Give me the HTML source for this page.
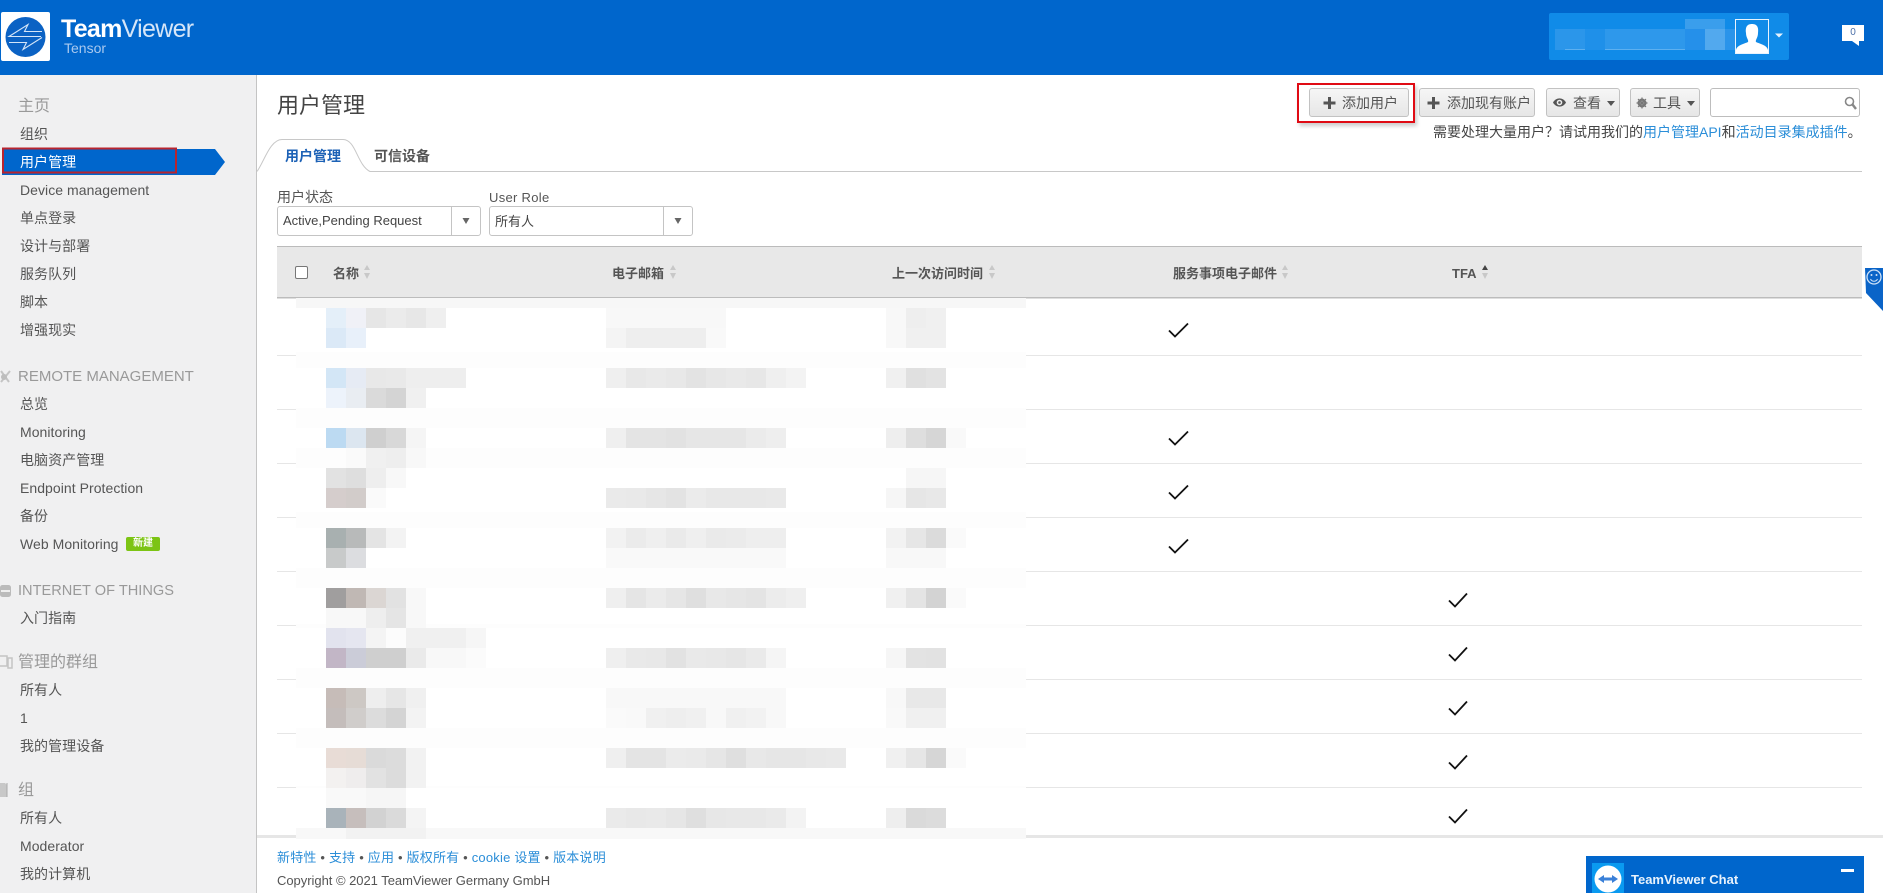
<!DOCTYPE html>
<html lang="zh">
<head>
<meta charset="utf-8">
<title>用户管理</title>
<style>
html,body{margin:0;padding:0;background:#fff}
body{width:1883px;height:893px;overflow:hidden;position:relative;font-family:"Liberation Sans","Noto Sans CJK SC",sans-serif;font-size:14px;color:#555}
.a{position:absolute;white-space:nowrap;line-height:20px}
.b{position:absolute;box-sizing:border-box;top:88px;height:29px;border:1px solid #c2c2c2;border-radius:3px;background:linear-gradient(#f6f6f6,#e6e6e6)}
.n{left:20px;color:#555;letter-spacing:.05px}
.s{left:18px;color:#999;font-size:16px}
.l{font-size:14.6px;letter-spacing:0}
.h{font-size:13px;font-weight:bold;color:#555}
a{color:#2b8ed8;text-decoration:none}
svg{position:absolute;overflow:visible}
</style>
</head>
<body>
<!-- header -->
<div style="position:absolute;left:0;top:0;width:1883px;height:75px;background:#0066cc"></div>
<div style="position:absolute;left:1px;top:12px;width:49px;height:49px;background:#fff;border-radius:2px"></div>
<svg style="left:0;top:0" width="60" height="70"><circle cx="25.5" cy="37" r="20" fill="#0b62c4"/><path d="M42 31.500H24.500L28 24.500 9 36.500H41M42 37.500 23 49.500 26.500 42.500H9" fill="none" stroke="#d4e5f8" stroke-width="1.100"/></svg>
<div class="a" style="left:61px;top:15px;font-size:25px;line-height:28px;color:#fff;letter-spacing:-.7px"><b>Team</b><span style="color:#d6e6f8">Viewer</span></div>
<div class="a" style="left:64px;top:38px;font-size:14px;color:#a9c9ef">Tensor</div>

<div style="position:absolute;left:1549px;top:13px;width:240px;height:47px;background:#108be8;border-radius:2px"></div>
<svg style="left:0;top:0" width="1883" height="75">
<rect x="1685" y="19" width="40" height="10" fill="#3a9eec"/>
<rect x="1555" y="29" width="30" height="21" fill="#2b96ea"/><rect x="1585" y="29" width="20" height="21" fill="#1f90e9"/><rect x="1605" y="29" width="80" height="21" fill="#2e98eb"/><rect x="1685" y="29" width="20" height="21" fill="#2590ea"/><rect x="1705" y="29" width="20" height="21" fill="#52a9ee"/><rect x="1725" y="29" width="10" height="21" fill="#2a94ea"/>
<rect x="1565" y="49" width="20" height="1" fill="#5db0f0"/><rect x="1605" y="49" width="80" height="1" fill="#5db0f0"/>
<rect x="1735.500" y="19.500" width="33" height="34" fill="#108be8" stroke="#e8f3fd"/>
<path d="M1736 53V50C1737 45 1744 44 1748 42 1749 40 1746 38 1746 33 1745 26 1748 24 1752 24S1759 26 1758 33C1758 38 1755 40 1756 42 1760 44 1767 45 1768 50V53Z" fill="#fff"/>
<path d="M1775 33.500H1783L1779 37.500Z" fill="#e6f2fc"/>
<path d="M1842 25H1864V41H1859V46L1852 41H1842Z" fill="#fff"/>
</svg>
<div class="a" style="left:1842px;top:23px;width:22px;text-align:center;font-size:10px;color:#4a6fa8">0</div>

<!-- sidebar -->
<div style="position:absolute;left:0;top:75px;width:256px;height:818px;background:#f0f0f1;border-right:1px solid #c4c4c4"></div>
<div class="a s" style="top:97px">主页</div>
<div class="a n" style="top:124px">组织</div>
<svg style="left:0;top:0" width="240" height="190"><rect x="2" y="152" width="172" height="23" fill="#9aa" opacity=".35"/><path d="M2 149H215L225 162 215 175H2Z" fill="#0066cc"/><rect x="3" y="148.500" width="173" height="24" fill="none" stroke="#b8242f" stroke-width="2"/></svg>
<div class="a n" style="top:152px;color:#fff">用户管理</div>
<div class="a n" style="top:180px">Device management</div>
<div class="a n" style="top:208px">单点登录</div>
<div class="a n" style="top:236px">设计与部署</div>
<div class="a n" style="top:264px">服务队列</div>
<div class="a n" style="top:292px">脚本</div>
<div class="a n" style="top:320px">增强现实</div>

<svg style="left:0;top:0" width="20" height="893">
<g fill="none" stroke="#c4c4c4" stroke-width="2"><path d="M1 371L9 382M10 371L1 382"/></g><circle cx="4" cy="377" r="3" fill="#bdbdbd"/>
<rect x="0" y="585" width="11" height="12" rx="2.500" fill="#bbb"/><path d="M1 591H10" stroke="#fff" stroke-width="1.500"/>
<path d="M0 656H7V666H0M8 658H12V668H8Z" fill="none" stroke="#c4c4c4" stroke-width="1.500"/>
<path d="M0 783H5L7 785V797H0Z" fill="#c8c8c8"/><path d="M7 783V797" stroke="#aaa"/>
</svg>
<div class="a s" style="top:367px;font-size:15px">REMOTE MANAGEMENT</div>
<div class="a n" style="top:394px">总览</div>
<div class="a n" style="top:422px">Monitoring</div>
<div class="a n" style="top:450px">电脑资产管理</div>
<div class="a n" style="top:478px">Endpoint Protection</div>
<div class="a n" style="top:506px">备份</div>
<div class="a n" style="top:534px">Web Monitoring</div>
<div class="a" style="left:126px;top:537px;width:34px;height:14px;line-height:14px;background:#7cc414;border-radius:2px;color:#fff;font-size:10px;font-weight:bold;text-align:center">新建</div>
<div class="a s l" style="top:581px">INTERNET OF THINGS</div>
<div class="a n" style="top:608px">入门指南</div>
<div class="a s" style="top:653px">管理的群组</div>
<div class="a n" style="top:680px">所有人</div>
<div class="a n" style="top:708px">1</div>
<div class="a n" style="top:736px">我的管理设备</div>
<div class="a s" style="top:781px">组</div>
<div class="a n" style="top:808px">所有人</div>
<div class="a n" style="top:836px">Moderator</div>
<div class="a n" style="top:864px">我的计算机</div>

<!-- title + toolbar -->
<div class="a" style="left:277px;top:91px;font-size:22px;line-height:30px;color:#444">用户管理</div>

<div style="position:absolute;left:1297px;top:83px;width:118px;height:40px;border:2px solid #e00b14;box-sizing:border-box;box-shadow:2px 3px 4px rgba(0,0,0,.2)"></div>
<div class="b" style="left:1309px;width:100px"></div>
<div class="b" style="left:1419px;width:116px"></div>
<div class="b" style="left:1546px;width:74px"></div>
<div class="b" style="left:1630px;width:70px"></div>
<div style="position:absolute;box-sizing:border-box;left:1710px;top:88px;width:150px;height:29px;border:1px solid #bdbdbd;border-radius:3px;background:#fff"></div>
<svg style="left:0;top:0" width="1883" height="125">
<path d="M1329.500 97V109M1323.500 103H1335.500M1433.500 97V109M1427.500 103H1439.500" stroke="#555" stroke-width="3"/>
<path d="M1553 102.500C1556 97 1563 97 1566 102.500 1563 108 1556 108 1553 102.500Z" fill="#555"/><circle cx="1559.500" cy="102.500" r="2.800" fill="#eee"/><circle cx="1559.500" cy="102.500" r="1.300" fill="#555"/>
<path d="M1607 101H1615L1611 106Z M1687 101H1695L1691 106Z" fill="#555"/>
<circle cx="1642" cy="103" r="3.400" fill="none" stroke="#777" stroke-width="2.200"/><path d="M1642 97.500V108.500M1636.500 103H1647.500M1638 99L1646 107M1646 99L1638 107" stroke="#777" stroke-width="1.200"/>
<circle cx="1849.500" cy="101.500" r="4" fill="none" stroke="#888" stroke-width="1.600"/><path d="M1852.500 104.500L1856 109" stroke="#888" stroke-width="2.400"/>
</svg>
<div class="a" style="left:1342px;top:93px;color:#555">添加用户</div>
<div class="a" style="left:1447px;top:93px;color:#555">添加现有账户</div>
<div class="a" style="left:1573px;top:93px;color:#555">查看</div>
<div class="a" style="left:1653px;top:93px;color:#555">工具</div>
<div class="a" style="left:1433px;top:122px;font-size:14px;color:#444">需要处理大量用户&#65311;请试用我们的<a href="#">用户管理API</a>和<a href="#">活动目录集成插件</a>。</div>

<!-- tabs -->
<svg style="left:0;top:0" width="1883" height="180"><path d="M257 171.500C264 162 270 139.500 282 139.500H343C356 139.500 357 165 370 171.500H1862" fill="#fff" stroke="#c8c8c8"/></svg>
<div class="a" style="left:285px;top:146px;font-weight:bold;color:#1d62b6">用户管理</div>
<div class="a" style="left:374px;top:146px;font-weight:bold;color:#555">可信设备</div>

<!-- filters -->
<div class="a" style="left:277px;top:187px;font-size:14px;color:#555">用户状态</div>
<div class="a" style="left:489px;top:188px;font-size:13px;color:#555;letter-spacing:.3px">User Role</div>
<div style="position:absolute;box-sizing:border-box;left:277px;top:206px;width:204px;height:30px;border:1px solid #c4c4c4;border-radius:3px"></div>
<div style="position:absolute;box-sizing:border-box;left:489px;top:206px;width:204px;height:30px;border:1px solid #c4c4c4;border-radius:3px"></div>
<svg style="left:0;top:0" width="800" height="240"><path d="M451.500 207V235M663.500 207V235" stroke="#c4c4c4"/><path d="M462.500 218H469.500L466 224Z M674.500 218H681.500L678 224Z" fill="#666"/></svg>
<div class="a" style="left:283px;top:211px;font-size:13px;color:#444">Active,Pending Request</div>
<div class="a" style="left:495px;top:212px;font-size:13px;color:#444">所有人</div>

<!-- table -->
<div style="position:absolute;left:277px;top:246px;width:1585px;height:52px;background:#e8e8e8;border-top:1px solid #bbb;box-sizing:border-box"></div>
<div style="position:absolute;box-sizing:border-box;left:295px;top:266px;width:13px;height:13px;background:#fff;border:1px solid #777;border-radius:2px"></div>
<div class="a h" style="left:333px;top:264px">名称</div>
<div class="a h" style="left:612px;top:264px">电子邮箱</div>
<div class="a h" style="left:892px;top:264px">上一次访问时间</div>
<div class="a h" style="left:1173px;top:264px">服务事项电子邮件</div>
<div class="a h" style="left:1452px;top:264px">TFA</div>

<svg style="left:0;top:0" width="1883" height="893">
<g fill="#c8c8c8">
<path d="M364 270L367 265 370 270ZM364 273L367 279 370 273Z"/>
<path d="M670 270L673 265 676 270ZM670 273L673 279 676 273Z"/>
<path d="M989 270L992 265 995 270ZM989 273L992 279 995 273Z"/>
<path d="M1282 270L1285 265 1288 270ZM1282 273L1285 279 1288 273Z"/>
<path d="M1482 273L1485 279 1488 273Z"/>
</g>
<path d="M1482 270L1485 265 1488 270Z" fill="#444"/>
<!-- row lines -->
<g fill="#e6e6e6">
<rect x="277" y="297" width="1585" height="1.500" fill="#bcbcbc"/>
<rect x="277" y="355" width="1585" height="1"/><rect x="277" y="409" width="1585" height="1"/><rect x="277" y="463" width="1585" height="1"/><rect x="277" y="517" width="1585" height="1"/><rect x="277" y="571" width="1585" height="1"/><rect x="277" y="625" width="1585" height="1"/><rect x="277" y="679" width="1585" height="1"/><rect x="277" y="733" width="1585" height="1"/><rect x="277" y="787" width="1585" height="1"/>
</g>
<rect x="257" y="835" width="1626" height="3" fill="#e6e6e6"/>
<!-- mosaic bands -->
<rect x="296" y="298" width="730" height="10" fill="#f7f7f7"/>
<g fill="#fdfdfd">
<rect x="296" y="352" width="730" height="16"/><rect x="296" y="408" width="730" height="20"/><rect x="296" y="448" width="730" height="20"/><rect x="296" y="512" width="730" height="16"/><rect x="296" y="568" width="730" height="20"/><rect x="296" y="624" width="730" height="4"/><rect x="296" y="668" width="730" height="20"/><rect x="296" y="728" width="730" height="20"/><rect x="296" y="786" width="730" height="2"/>
</g>
<rect x="296" y="828" width="730" height="11" fill="#f8f8f8"/>
<!-- name mosaic -->
<g shape-rendering="crispEdges">
<g transform="translate(326 308)"><rect width="20" height="20" fill="#e4eff9"/><rect x="20" width="20" height="20" fill="#f0f1f7"/><rect x="40" width="20" height="20" fill="#e6e6e6"/><rect x="60" width="20" height="20" fill="#ebebeb"/><rect x="80" width="20" height="20" fill="#e7e7e7"/><rect x="100" width="20" height="20" fill="#efefef"/></g>
<g transform="translate(326 328)"><rect width="20" height="20" fill="#dbe9f7"/><rect x="20" width="20" height="20" fill="#e8f0fa"/></g>
<g transform="translate(326 368)"><rect width="20" height="20" fill="#d3e6f6"/><rect x="20" width="20" height="20" fill="#e6ebf4"/><rect x="40" width="20" height="20" fill="#e8e8e8"/><rect x="60" width="20" height="20" fill="#e9e9e9"/><rect x="80" width="60" height="20" fill="#eeeeee"/></g>
<g transform="translate(326 388)"><rect width="20" height="20" fill="#edf3fb"/><rect x="20" width="20" height="20" fill="#e9edf2"/><rect x="40" width="20" height="20" fill="#dadada"/><rect x="60" width="20" height="20" fill="#d4d4d4"/><rect x="80" width="20" height="20" fill="#f0f0f0"/></g>
<g transform="translate(326 428)"><rect width="20" height="20" fill="#bcdaf2"/><rect x="20" width="20" height="20" fill="#dce6f0"/><rect x="40" width="20" height="20" fill="#cfcfcf"/><rect x="60" width="20" height="20" fill="#d8d8d8"/><rect x="80" width="20" height="20" fill="#f5f5f5"/></g>
<g transform="translate(326 448)"><rect x="20" width="20" height="20" fill="#fafafa"/><rect x="40" width="20" height="20" fill="#f0f0f0"/><rect x="60" width="20" height="20" fill="#eeeeee"/><rect x="80" width="20" height="20" fill="#f8f8f8"/></g>
<g transform="translate(326 468)"><rect width="20" height="20" fill="#e2e2e2"/><rect x="20" width="20" height="20" fill="#dedede"/><rect x="40" width="20" height="20" fill="#eeeeee"/><rect x="60" width="20" height="20" fill="#f8f8f8"/></g>
<g transform="translate(326 488)"><rect width="20" height="20" fill="#d5cdcc"/><rect x="20" width="20" height="20" fill="#d2ccca"/><rect x="40" width="20" height="20" fill="#fafafa"/></g>
<g transform="translate(326 528)"><rect width="20" height="20" fill="#a8b0b0"/><rect x="20" width="20" height="20" fill="#b8baba"/><rect x="40" width="20" height="20" fill="#e4e4e4"/><rect x="60" width="20" height="20" fill="#f3f3f3"/></g>
<g transform="translate(326 548)"><rect width="20" height="20" fill="#c8caca"/><rect x="20" width="20" height="20" fill="#dcdde0"/></g>
<g transform="translate(326 588)"><rect width="20" height="20" fill="#a09e9e"/><rect x="20" width="20" height="20" fill="#c0b8b4"/><rect x="40" width="20" height="20" fill="#dbd6d3"/><rect x="60" width="20" height="20" fill="#e2e2e2"/><rect x="80" width="20" height="20" fill="#f8f8f8"/></g>
<g transform="translate(326 608)"><rect width="40" height="20" fill="#f8f8f8"/><rect x="40" width="20" height="20" fill="#eeeeee"/><rect x="60" width="20" height="20" fill="#e5e5e5"/><rect x="80" width="20" height="20" fill="#f8f8f8"/></g>
<g transform="translate(326 628)"><rect width="20" height="20" fill="#e2e3ee"/><rect x="20" width="20" height="20" fill="#e5e6f0"/><rect x="40" width="20" height="20" fill="#f4f4f4"/><rect x="60" width="20" height="20" fill="#fcfcfc"/><rect x="80" width="60" height="20" fill="#f0f0f0"/><rect x="140" width="20" height="20" fill="#f6f6f6"/></g>
<g transform="translate(326 648)"><rect width="20" height="20" fill="#c2b6c6"/><rect x="20" width="20" height="20" fill="#cbccd8"/><rect x="40" width="40" height="20" fill="#cfcfcf"/><rect x="80" width="20" height="20" fill="#eaeaea"/><rect x="100" width="40" height="20" fill="#f8f8f8"/><rect x="140" width="20" height="20" fill="#fbfbfb"/></g>
<g transform="translate(326 688)"><rect width="20" height="20" fill="#c6bcb8"/><rect x="20" width="20" height="20" fill="#cdc8c4"/><rect x="40" width="20" height="20" fill="#eeeeee"/><rect x="60" width="20" height="20" fill="#e6e6e6"/><rect x="80" width="20" height="20" fill="#f0f0f0"/></g>
<g transform="translate(326 708)"><rect width="20" height="20" fill="#c4bdbb"/><rect x="20" width="20" height="20" fill="#d0cdcb"/><rect x="40" width="20" height="20" fill="#dcdcdc"/><rect x="60" width="20" height="20" fill="#d4d4d4"/><rect x="80" width="20" height="20" fill="#f3f3f3"/></g>
<g transform="translate(326 748)"><rect width="20" height="20" fill="#e8dcd6"/><rect x="20" width="20" height="20" fill="#e6dcd6"/><rect x="40" width="20" height="20" fill="#dadada"/><rect x="60" width="20" height="20" fill="#dcdcdc"/><rect x="80" width="20" height="20" fill="#f2f2f2"/></g>
<g transform="translate(326 768)"><rect width="20" height="20" fill="#f3f1f0"/><rect x="20" width="20" height="20" fill="#efeded"/><rect x="40" width="20" height="20" fill="#e2e2e2"/><rect x="60" width="20" height="20" fill="#dcdcdc"/><rect x="80" width="20" height="20" fill="#f2f2f2"/></g>
<g transform="translate(326 788)"><rect width="40" height="20" fill="#f9f9f9"/><rect x="40" width="40" height="20" fill="#f6f6f6"/></g>
<g transform="translate(326 808)"><rect width="20" height="20" fill="#a9b3ba"/><rect x="20" width="20" height="20" fill="#c6bebc"/><rect x="40" width="20" height="20" fill="#d2d2d2"/><rect x="60" width="20" height="20" fill="#dadada"/><rect x="80" width="20" height="20" fill="#f4f4f4"/></g>
<g transform="translate(346 828)"><rect width="80" height="11" fill="#f2f2f2"/></g>
<!-- email mosaic -->
<rect x="606" y="308" width="120" height="20" fill="#f8f8f8"/>
<g transform="translate(606 328)"><rect width="20" height="20" fill="#f4f4f4"/><rect x="20" width="80" height="20" fill="#eeeeee"/><rect x="100" width="20" height="20" fill="#f9f9f9"/></g>
<g transform="translate(606 368)"><rect width="20" height="20" fill="#efefef"/><rect x="20" width="20" height="20" fill="#e8e8e8"/><rect x="40" width="20" height="20" fill="#eaeaea"/><rect x="60" width="20" height="20" fill="#e8e8e8"/><rect x="80" width="20" height="20" fill="#e3e3e3"/><rect x="100" width="20" height="20" fill="#e7e7e7"/><rect x="120" width="20" height="20" fill="#e9e9e9"/><rect x="140" width="20" height="20" fill="#e7e7e7"/><rect x="160" width="20" height="20" fill="#efefef"/><rect x="180" width="20" height="20" fill="#f3f3f3"/></g>
<g transform="translate(606 428)"><rect width="20" height="20" fill="#efefef"/><rect x="20" width="40" height="20" fill="#e4e4e4"/><rect x="60" width="20" height="20" fill="#e2e2e2"/><rect x="80" width="60" height="20" fill="#e6e6e6"/><rect x="140" width="20" height="20" fill="#ebebeb"/><rect x="160" width="20" height="20" fill="#eeeeee"/></g>
<g transform="translate(606 488)"><rect width="20" height="20" fill="#eaeaea"/><rect x="20" width="20" height="20" fill="#e9e9e9"/><rect x="40" width="20" height="20" fill="#e6e6e6"/><rect x="60" width="20" height="20" fill="#e3e3e3"/><rect x="80" width="20" height="20" fill="#ebebeb"/><rect x="100" width="60" height="20" fill="#e8e8e8"/><rect x="160" width="20" height="20" fill="#e9e9e9"/></g>
<g transform="translate(606 528)"><rect width="20" height="20" fill="#f2f2f2"/><rect x="20" width="20" height="20" fill="#ebebeb"/><rect x="40" width="20" height="20" fill="#efefef"/><rect x="60" width="20" height="20" fill="#eaeaea"/><rect x="80" width="20" height="20" fill="#efefef"/><rect x="100" width="20" height="20" fill="#eaeaea"/><rect x="120" width="20" height="20" fill="#ebebeb"/><rect x="140" width="40" height="20" fill="#eeeeee"/></g>
<rect x="606" y="548" width="180" height="20" fill="#f9f9f9"/>
<g transform="translate(606 588)"><rect width="20" height="20" fill="#efefef"/><rect x="20" width="20" height="20" fill="#e5e5e5"/><rect x="40" width="20" height="20" fill="#ebebeb"/><rect x="60" width="20" height="20" fill="#e6e6e6"/><rect x="80" width="20" height="20" fill="#dfdfdf"/><rect x="100" width="20" height="20" fill="#e8e8e8"/><rect x="120" width="20" height="20" fill="#e6e6e6"/><rect x="140" width="20" height="20" fill="#e4e4e4"/><rect x="160" width="20" height="20" fill="#ececec"/><rect x="180" width="20" height="20" fill="#efefef"/></g>
<g transform="translate(606 648)"><rect width="20" height="20" fill="#efefef"/><rect x="20" width="20" height="20" fill="#e9e9e9"/><rect x="40" width="20" height="20" fill="#e8e8e8"/><rect x="60" width="20" height="20" fill="#e2e2e2"/><rect x="80" width="20" height="20" fill="#e9e9e9"/><rect x="100" width="20" height="20" fill="#e8e8e8"/><rect x="120" width="20" height="20" fill="#e6e6e6"/><rect x="140" width="20" height="20" fill="#eaeaea"/><rect x="160" width="20" height="20" fill="#f5f5f5"/></g>
<rect x="606" y="688" width="180" height="20" fill="#f8f8f8"/>
<g transform="translate(606 708)"><rect width="20" height="20" fill="#fafafa"/><rect x="20" width="20" height="20" fill="#f9f9f9"/><rect x="40" width="20" height="20" fill="#f0f0f0"/><rect x="60" width="20" height="20" fill="#eeeeee"/><rect x="80" width="20" height="20" fill="#f0f0f0"/><rect x="100" width="20" height="20" fill="#f8f8f8"/><rect x="120" width="20" height="20" fill="#f0f0f0"/><rect x="140" width="20" height="20" fill="#f2f2f2"/><rect x="160" width="20" height="20" fill="#f8f8f8"/></g>
<g transform="translate(606 748)"><rect width="20" height="20" fill="#efefef"/><rect x="20" width="40" height="20" fill="#e4e4e4"/><rect x="60" width="20" height="20" fill="#ebebeb"/><rect x="80" width="20" height="20" fill="#eaeaea"/><rect x="100" width="20" height="20" fill="#e6e6e6"/><rect x="120" width="20" height="20" fill="#dfdfdf"/><rect x="140" width="20" height="20" fill="#e8e8e8"/><rect x="160" width="40" height="20" fill="#e6e6e6"/><rect x="200" width="20" height="20" fill="#e8e8e8"/><rect x="220" width="20" height="20" fill="#e9e9e9"/></g>
<g transform="translate(606 808)"><rect width="20" height="20" fill="#eaeaea"/><rect x="20" width="20" height="20" fill="#e8e8e8"/><rect x="40" width="20" height="20" fill="#e9e9e9"/><rect x="60" width="20" height="20" fill="#e6e6e6"/><rect x="80" width="20" height="20" fill="#dfdfdf"/><rect x="100" width="20" height="20" fill="#e7e7e7"/><rect x="120" width="40" height="20" fill="#e8e8e8"/><rect x="160" width="20" height="20" fill="#eaeaea"/><rect x="180" width="20" height="20" fill="#f3f3f3"/></g>
<!-- time mosaic -->
<g transform="translate(886 308)"><rect width="20" height="40" fill="#f8f8f8"/><rect x="20" width="20" height="20" fill="#eeeeee"/><rect x="40" width="20" height="20" fill="#f0f0f0"/><rect x="20" y="20" width="40" height="20" fill="#f0f0f0"/></g>
<g transform="translate(886 368)"><rect width="20" height="20" fill="#f0f0f0"/><rect x="20" width="20" height="20" fill="#e0e0e0"/><rect x="40" width="20" height="20" fill="#e3e3e3"/></g>
<g transform="translate(886 428)"><rect width="20" height="20" fill="#eeeeee"/><rect x="20" width="20" height="20" fill="#dedede"/><rect x="40" width="20" height="20" fill="#d6d6d6"/><rect x="60" width="20" height="20" fill="#f9f9f9"/></g>
<rect x="906" y="468" width="40" height="20" fill="#f6f6f6"/>
<g transform="translate(886 488)"><rect width="20" height="20" fill="#f6f6f6"/><rect x="20" width="20" height="20" fill="#e6e6e6"/><rect x="40" width="20" height="20" fill="#e8e8e8"/></g>
<g transform="translate(886 528)"><rect width="20" height="20" fill="#f2f2f2"/><rect x="20" width="20" height="20" fill="#e6e6e6"/><rect x="40" width="20" height="20" fill="#dbdbdb"/><rect x="60" width="20" height="20" fill="#fafafa"/></g>
<rect x="886" y="548" width="60" height="20" fill="#f8f8f8"/>
<g transform="translate(886 588)"><rect width="20" height="20" fill="#f0f0f0"/><rect x="20" width="20" height="20" fill="#e4e4e4"/><rect x="40" width="20" height="20" fill="#d3d3d3"/><rect x="60" width="20" height="20" fill="#fafafa"/></g>
<g transform="translate(886 648)"><rect width="20" height="20" fill="#f6f6f6"/><rect x="20" width="20" height="20" fill="#e3e3e3"/><rect x="40" width="20" height="20" fill="#e2e2e2"/></g>
<g transform="translate(886 688)"><rect width="20" height="20" fill="#f8f8f8"/><rect x="20" width="40" height="20" fill="#e8e8e8"/></g>
<g transform="translate(886 708)"><rect width="20" height="20" fill="#f9f9f9"/><rect x="20" width="40" height="20" fill="#f0f0f0"/></g>
<g transform="translate(886 748)"><rect width="20" height="20" fill="#f0f0f0"/><rect x="20" width="20" height="20" fill="#e6e6e6"/><rect x="40" width="20" height="20" fill="#d6d6d6"/><rect x="60" width="20" height="20" fill="#fafafa"/></g>
<g transform="translate(886 808)"><rect width="20" height="20" fill="#eeeeee"/><rect x="20" width="20" height="20" fill="#dadada"/><rect x="40" width="20" height="20" fill="#dcdcdc"/></g>
</g>
<!-- checks -->
<g fill="none" stroke="#111" stroke-width="1.800">
<path d="M1169 330.500L1175 336.500 1188 323.500"/><path d="M1169 438.500L1175 444.500 1188 431.500"/><path d="M1169 492.500L1175 498.500 1188 485.500"/><path d="M1169 546.500L1175 552.500 1188 539.500"/>
<path d="M1449 600.500L1455 606.500 1467 593.500"/><path d="M1449 654.500L1455 660.500 1467 647.500"/><path d="M1449 708.500L1455 714.500 1467 701.500"/><path d="M1449 762.500L1455 768.500 1467 755.500"/><path d="M1449 816.500L1455 822.500 1467 809.500"/>
</g>
<!-- feedback -->
<path d="M1865 268H1883V311L1866 293Z" fill="#0a64c8"/>
<circle cx="1874" cy="277" r="7" fill="none" stroke="#cfe2f7" stroke-width="1.300"/><circle cx="1871.500" cy="275" r="1" fill="#cfe2f7"/><circle cx="1876.500" cy="275" r="1" fill="#cfe2f7"/><path d="M1870.500 279C1872 282 1876 282 1877.500 279" fill="none" stroke="#cfe2f7"/>
</svg>

<!-- footer -->
<div class="a" style="left:277px;top:848px;font-size:13px;color:#555;letter-spacing:.2px"><a href="#">新特性</a> • <a href="#">支持</a> • <a href="#">应用</a> • <a href="#">版权所有</a> • <a href="#">cookie 设置</a> • <a href="#">版本说明</a></div>
<div class="a" style="left:277px;top:871px;font-size:13px;color:#555;letter-spacing:-.03px">Copyright © 2021 TeamViewer Germany GmbH</div>

<!-- chat -->
<div style="position:absolute;left:1586px;top:856px;width:278px;height:37px;background:#0066cc"></div>
<svg style="left:0;top:0" width="1883" height="893"><rect x="1592" y="863" width="32" height="30" fill="#0a9af0"/><circle cx="1608" cy="879" r="13.500" fill="#fff"/><path d="M1598 879L1604 875V877.500H1612V875L1618 879 1612 883V880.500H1604V883Z" fill="#3a80d8"/><rect x="1841" y="869" width="13" height="3" fill="#fff"/></svg>
<div class="a" style="left:1631px;top:870px;font-size:13px;font-weight:bold;color:#e8f2fc">TeamViewer Chat</div>
</body>
</html>
